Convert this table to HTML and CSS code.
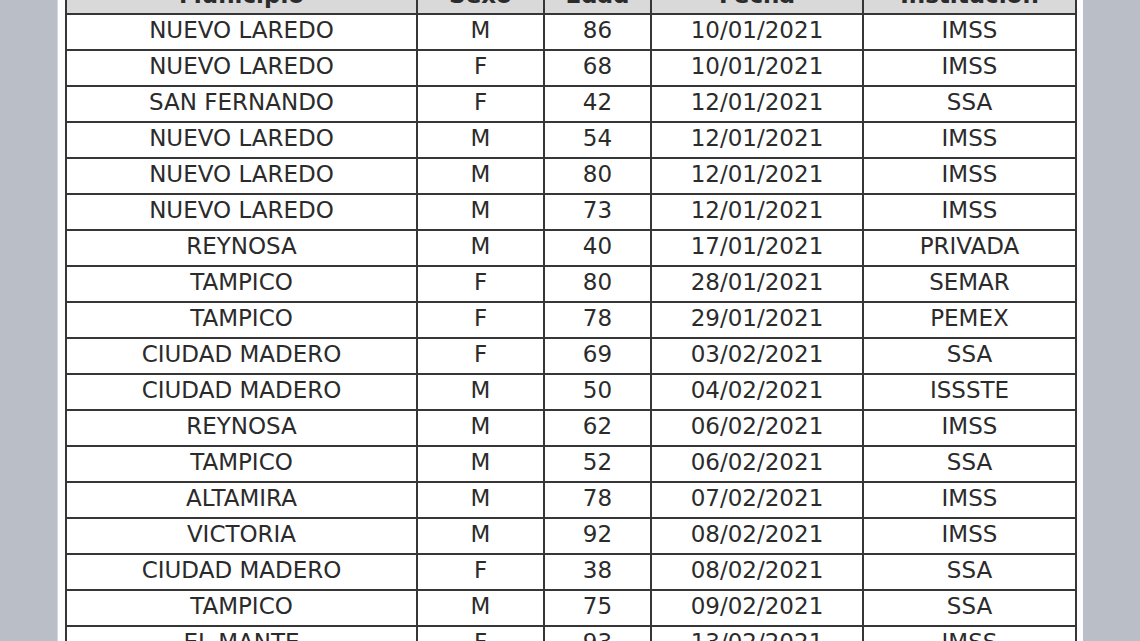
FILE: index.html
```html
<!DOCTYPE html>
<html lang="es">
<head>
<meta charset="utf-8">
<title>Defunciones</title>
<link rel="stylesheet" href="styles.css">
</head>
<body>
<div class="page">
  <table class="data">
    <colgroup>
      <col class="c-mun"><col class="c-sex"><col class="c-edad"><col class="c-fecha"><col class="c-inst">
    </colgroup>
    <thead>
      <tr><th>Municipio</th><th>Sexo</th><th>Edad</th><th>Fecha</th><th>Institución</th></tr>
    </thead>
    <tbody>
      <tr><td>NUEVO LAREDO</td><td>M</td><td>86</td><td>10/01/2021</td><td>IMSS</td></tr>
      <tr><td>NUEVO LAREDO</td><td>F</td><td>68</td><td>10/01/2021</td><td>IMSS</td></tr>
      <tr><td>SAN FERNANDO</td><td>F</td><td>42</td><td>12/01/2021</td><td>SSA</td></tr>
      <tr><td>NUEVO LAREDO</td><td>M</td><td>54</td><td>12/01/2021</td><td>IMSS</td></tr>
      <tr><td>NUEVO LAREDO</td><td>M</td><td>80</td><td>12/01/2021</td><td>IMSS</td></tr>
      <tr><td>NUEVO LAREDO</td><td>M</td><td>73</td><td>12/01/2021</td><td>IMSS</td></tr>
      <tr><td>REYNOSA</td><td>M</td><td>40</td><td>17/01/2021</td><td>PRIVADA</td></tr>
      <tr><td>TAMPICO</td><td>F</td><td>80</td><td>28/01/2021</td><td>SEMAR</td></tr>
      <tr><td>TAMPICO</td><td>F</td><td>78</td><td>29/01/2021</td><td>PEMEX</td></tr>
      <tr><td>CIUDAD MADERO</td><td>F</td><td>69</td><td>03/02/2021</td><td>SSA</td></tr>
      <tr><td>CIUDAD MADERO</td><td>M</td><td>50</td><td>04/02/2021</td><td>ISSSTE</td></tr>
      <tr><td>REYNOSA</td><td>M</td><td>62</td><td>06/02/2021</td><td>IMSS</td></tr>
      <tr><td>TAMPICO</td><td>M</td><td>52</td><td>06/02/2021</td><td>SSA</td></tr>
      <tr><td>ALTAMIRA</td><td>M</td><td>78</td><td>07/02/2021</td><td>IMSS</td></tr>
      <tr><td>VICTORIA</td><td>M</td><td>92</td><td>08/02/2021</td><td>IMSS</td></tr>
      <tr><td>CIUDAD MADERO</td><td>F</td><td>38</td><td>08/02/2021</td><td>SSA</td></tr>
      <tr><td>TAMPICO</td><td>M</td><td>75</td><td>09/02/2021</td><td>SSA</td></tr>
      <tr><td>EL MANTE</td><td>F</td><td>93</td><td>13/02/2021</td><td>IMSS</td></tr>
    </tbody>
  </table>
</div>
</body>
</html>
```
FILE: styles.css
```css
html, body {
  margin: 0;
  padding: 0;
  height: 100%;
  overflow: hidden;
}
body {
  background: #babec6;
  font-family: "DejaVu Sans", Verdana, sans-serif;
}
.page {
  margin-left: 57px;
  width: 1026px;
  height: 100%;
  background: #fdfdfd;
  border-left: 1px solid #d4d6da;
  box-sizing: border-box;
  padding-left: 7px;
  overflow: hidden;
}
.data {
  border-collapse: collapse;
  table-layout: fixed;
  width: 1012px;
  margin-top: -23px;
  color: #2b2b2b;
  font-size: 23px;
}
.c-mun { width: 351px; }
.c-sex { width: 127px; }
.c-edad { width: 107px; }
.c-fecha { width: 212px; }
.c-inst { width: 213px; }
.data th, .data td {
  border: 2px solid #363636;
  height: 36px;
  box-sizing: border-box;
  padding: 0 0 4px 0;
  text-align: center;
  vertical-align: middle;
  white-space: nowrap;
  line-height: 27px;
}
.data th {
  background: #d9d9d9;
  font-weight: bold;
  padding-bottom: 2px;
}
.data td {
  background: #ffffff;
}
```
